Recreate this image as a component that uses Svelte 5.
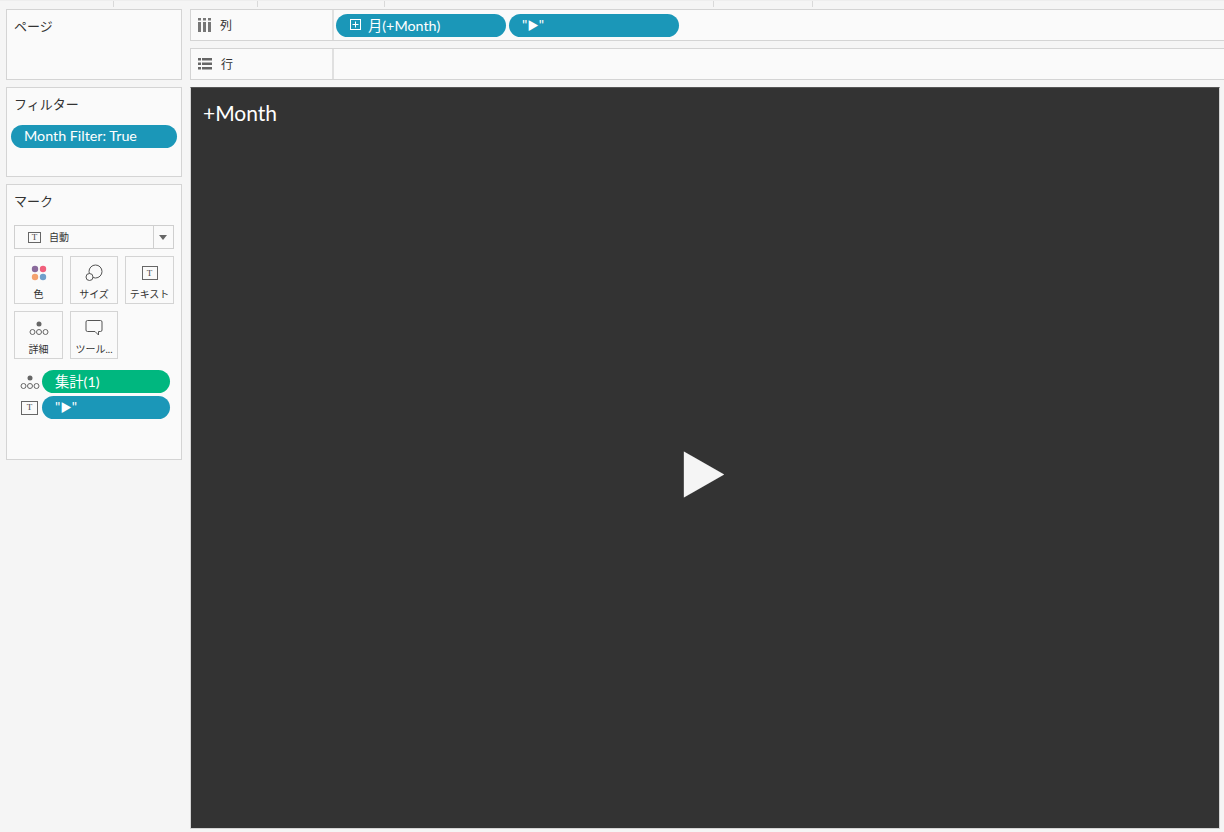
<script lang="ts">
  const ticks = [114, 144, 127, 329, 99];
  const cards = [
    { label: '色', icon: 'color' },
    { label: 'サイズ', icon: 'size' },
    { label: 'テキスト', icon: 'text' },
    { label: '詳細', icon: 'detail' },
    { label: 'ツール...', icon: 'tip' }
  ];
</script>

{#snippet detailIcon()}
  <svg width="20" height="16" viewBox="0 0 20 16" fill="none" stroke="#666" stroke-width="1">
    <circle cx="10" cy="4" r="2.5" fill="#666" stroke="none" />
    <circle cx="3.5" cy="12" r="2.5" />
    <circle cx="10" cy="12" r="2.5" />
    <circle cx="16.500" cy="12" r="2.5" />
  </svg>
{/snippet}

{#snippet textIcon(w, h)}
  <span class="t-icon" style="width: {w}px; height: {h}px">T</span>
{/snippet}

{#snippet playLabel()}
  <span>"<span class="play">▶</span>"</span>
{/snippet}

<div class="page">
  <div class="ruler">
    {#each ticks as w}
      <span class="tick" style="width: {w}px"></span>
    {/each}
  </div>

  <div class="layout">
    <aside class="side">
      <section class="panel pages">
        <h3>ページ</h3>
      </section>

      <section class="panel filters">
        <h3>フィルター</h3>
        <div class="pill filter-pill">Month Filter: True</div>
      </section>

      <section class="panel marks">
        <h3>マーク</h3>
        <div class="select">
          <div class="select-main">
            {@render textIcon(13, 11)}
            <span class="select-text">自動</span>
          </div>
          <div class="select-arrow"></div>
        </div>

        <div class="mark-grid">
          {#each cards as c}
            <div class="mark-card">
              <div class="mark-icon">
                {#if c.icon === 'color'}
                  <svg width="16" height="16" viewBox="0 0 16 16">
                    <circle cx="4" cy="4" r="3.2" fill="#8a6a9c" />
                    <circle cx="12" cy="4" r="3.2" fill="#f0607c" />
                    <circle cx="4" cy="12" r="3.2" fill="#f4a26e" />
                    <circle cx="12" cy="12" r="3.2" fill="#6f9fcb" />
                  </svg>
                {:else if c.icon === 'size'}
                  <svg width="18" height="18" viewBox="0 0 18 18" fill="#fafafa" stroke="#555" stroke-width="1">
                    <circle cx="10.500" cy="7.500" r="6.500" />
                    <circle cx="4.500" cy="13" r="3.500" />
                  </svg>
                {:else if c.icon === 'text'}
                  {@render textIcon(16, 14)}
                {:else if c.icon === 'detail'}
                  {@render detailIcon()}
                {:else}
                  <svg width="18" height="16" viewBox="0 0 18 16" fill="none" stroke="#555" stroke-width="1">
                    <path d="M2.500 0.500h13a1.500 1.500 0 0 1 1.500 1.500v8a1.500 1.500 0 0 1-1.500 1.500h-2v3.500l-3.500-3.500h-7.500a1.500 1.500 0 0 1-1.500-1.500v-8a1.500 1.500 0 0 1 1.500-1.500z" />
                  </svg>
                {/if}
              </div>
              <span>{c.label}</span>
            </div>
          {/each}
        </div>

        <div class="mark-pills">
          <div class="mark-row">
            <div class="mark-row-icon">{@render detailIcon()}</div>
            <div class="pill green">集計(1)</div>
          </div>
          <div class="mark-row">
            <div class="mark-row-icon">{@render textIcon(17, 14)}</div>
            <div class="pill">{@render playLabel()}</div>
          </div>
        </div>
      </section>
    </aside>

    <main class="main">
      <div class="shelf">
        <div class="shelf-label">
          <svg width="13" height="14" viewBox="0 0 13 14" fill="#777">
            <rect x="0" y="0" width="3" height="2.500" />
            <rect x="0" y="4" width="3" height="10" />
            <rect x="5" y="0" width="3" height="2.500" />
            <rect x="5" y="4" width="3" height="10" />
            <rect x="10" y="0" width="3" height="2.500" />
            <rect x="10" y="4" width="3" height="10" />
          </svg>
          <span class="shelf-name">列</span>
        </div>
        <div class="shelf-body">
          <div class="pill shelf-pill">
            <svg class="plus" width="11" height="11" viewBox="0 0 11 11" fill="none" stroke="#fff" stroke-width="1">
              <rect x="0.500" y="0.500" width="10" height="10" />
              <path d="M5.500 2.500v6M2.500 5.500h6" />
            </svg>
            月(+Month)
          </div>
          <div class="pill shelf-pill">{@render playLabel()}</div>
        </div>
      </div>

      <div class="shelf">
        <div class="shelf-label">
          <svg width="14" height="12" viewBox="0 0 14 12" fill="#666">
            <rect x="0" y="0" width="3" height="2.500" />
            <rect x="4" y="0" width="10" height="2.500" />
            <rect x="0" y="4.500" width="3" height="2.500" />
            <rect x="4" y="4.500" width="10" height="2.500" />
            <rect x="0" y="9" width="3" height="2.500" />
            <rect x="4" y="9" width="10" height="2.500" />
          </svg>
          <span class="shelf-name">行</span>
        </div>
        <div class="shelf-body"></div>
      </div>

      <div class="view">
        <div class="view-title">+Month</div>
        <div class="view-mark">▶</div>
      </div>
    </main>
  </div>
</div>

<style>
  :global(body) {
    margin: 0;
    background: #f5f5f5;
  }

  .page {
    width: 1224px;
    height: 832px;
    overflow: hidden;
    background: #f5f5f5;
    color: #333;
    font-family: Lato, 'Noto Sans CJK JP', sans-serif;
  }

  .ruler {
    display: flex;
    height: 7px;
    border-top: 1px solid #eee;
    box-sizing: border-box;
    margin-bottom: 2px;
  }

  .tick {
    box-sizing: border-box;
    border-right: 1px solid #d9d9d9;
  }

  .layout {
    display: flex;
    gap: 8px;
    padding-left: 6px;
  }

  .side {
    display: flex;
    flex-direction: column;
    gap: 7px;
    width: 176px;
    flex-shrink: 0;
  }

  .panel {
    box-sizing: border-box;
    background: #fafafa;
    border: 1px solid #d4d4d4;
    padding: 7px 7px 0;
  }

  .panel h3 {
    margin: 0;
    font-size: 13px;
    font-weight: 400;
    line-height: 18px;
    color: #333;
  }

  .pages {
    height: 71px;
  }

  .filters {
    height: 90px;
    padding-left: 4px;
  }

  .filters h3 {
    padding-left: 3px;
  }

  .marks {
    height: 276px;
  }

  .pill {
    box-sizing: border-box;
    display: flex;
    align-items: center;
    height: 23px;
    padding: 0 0 2px 13px;
    border-radius: 12px;
    background: #1b97b8;
    color: #fff;
    font-size: 14.3px;
    white-space: nowrap;
  }

  .play {
    font-size: 11.5px;
  }

  .filter-pill {
    width: 166px;
    margin-top: 12px;
  }

  .select {
    box-sizing: border-box;
    display: flex;
    width: 160px;
    height: 24px;
    margin-top: 15px;
    background: #fafafa;
    border: 1px solid #cfcfcf;
    font-size: 10px;
  }

  .select-main {
    flex: 1;
    display: flex;
    align-items: center;
    gap: 8px;
    padding-left: 13px;
  }

  .select-text {
    padding-bottom: 2px;
  }

  .select-arrow {
    width: 19px;
    border-left: 1px solid #cfcfcf;
    position: relative;
  }

  .select-arrow::after {
    content: '';
    position: absolute;
    left: 5px;
    top: 9px;
    border-left: 4px solid transparent;
    border-right: 4px solid transparent;
    border-top: 5px solid #666;
  }

  .t-icon {
    box-sizing: border-box;
    display: inline-flex;
    align-items: center;
    justify-content: center;
    border: 1px solid #666;
    font-family: 'Liberation Serif', serif;
    font-size: 9px;
    line-height: 1;
    color: #444;
  }

  .mark-grid {
    display: grid;
    grid-template-columns: 49px 48px 49px;
    gap: 7px;
    margin-top: 7px;
  }

  .mark-card {
    box-sizing: border-box;
    height: 48px;
    display: flex;
    flex-direction: column;
    align-items: center;
    background: #fafafa;
    border: 1px solid #d4d4d4;
    font-size: 10px;
    line-height: 14px;
    white-space: nowrap;
    color: #333;
  }

  .mark-icon {
    height: 24px;
    margin-top: 4px;
    margin-bottom: 2px;
    display: flex;
    align-items: center;
    justify-content: center;
  }

  .mark-pills {
    display: flex;
    flex-direction: column;
    gap: 3px;
    margin-top: 11px;
  }

  .mark-row {
    display: flex;
    align-items: center;
    padding-left: 4px;
  }

  .mark-row-icon {
    width: 24px;
    padding-right: 1px;
    box-sizing: border-box;
    display: flex;
    justify-content: center;
    flex-shrink: 0;
  }

  .mark-row .pill {
    width: 128px;
  }

  .green {
    background: #00b77f;
  }

  .main {
    flex: 1;
    min-width: 0;
    display: flex;
    flex-direction: column;
  }

  .shelf {
    box-sizing: border-box;
    display: flex;
    height: 32px;
    margin-bottom: 7px;
    background: #fafafa;
    border-top: 1px solid #d4d4d4;
    border-bottom: 1px solid #d4d4d4;
    border-left: 1px solid #d4d4d4;
  }

  .shelf-label {
    box-sizing: border-box;
    width: 143px;
    display: flex;
    align-items: center;
    gap: 9px;
    padding-left: 7px;
    border-right: 2px solid #e0e0e0;
    font-size: 12px;
  }

  .shelf-name {
    padding-bottom: 2px;
  }

  .shelf-body {
    flex: 1;
    display: flex;
    align-items: center;
    gap: 3px;
    padding-left: 2px;
  }

  .shelf-pill {
    width: 170px;
  }

  .plus {
    margin-right: 7px;
    margin-left: 1px;
  }

  .view {
    box-sizing: border-box;
    width: 1030px;
    height: 742px;
    display: flex;
    align-items: center;
    justify-content: center;
    position: relative;
    background: #333;
    border: 1px solid #d4d4d4;
    border-top-color: #555;
  }

  .view-title {
    position: absolute;
    left: 12px;
    top: 10px;
    font-size: 21px;
    line-height: 30px;
    color: #fff;
  }

  .view-mark {
    font-family: 'DejaVu Sans', sans-serif;
    font-size: 60px;
    line-height: 1;
    color: #f5f5f5;
    margin-left: -2px;
    margin-top: 22px;
    transform: scaleX(0.88);
  }
</style>
